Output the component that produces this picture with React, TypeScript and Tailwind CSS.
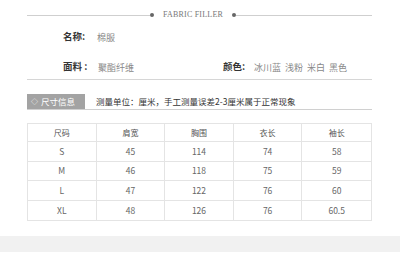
import React from "react";

const cjk = { fontFamily: '"Noto Sans CJK SC", "Noto Sans", sans-serif' };

const rows = [
  ["S", "45", "114", "74", "58"],
  ["M", "46", "118", "75", "59"],
  ["L", "47", "122", "76", "60"],
  ["XL", "48", "126", "76", "60.5"],
];

export default function App() {
  return (
    <div className="w-[400px] h-[270px] bg-white overflow-hidden" style={cjk}>
      <div className="px-[27px] pr-[28px]">
        {/* title */}
        <div className="h-[30px] pt-[9px] flex items-start">
          <div className="h-[12px] w-full flex items-center">
            <div className="flex-1 h-px bg-[#cfcfcf]" />
            <div className="w-[4px] h-[4px] rounded-full bg-[#666]" />
            <div
              className="px-[9px] text-[8px] leading-none text-[#777] tracking-[0.2px]"
              style={{ fontFamily: '"Liberation Serif", serif' }}
            >
              FABRIC FILLER
            </div>
            <div className="w-[4px] h-[4px] rounded-full bg-[#666]" />
            <div className="w-[136px] h-px bg-[#cfcfcf]" />
          </div>
        </div>
        {/* info */}
        <div className="pl-[36px] h-[50px] border-b border-[#d6d6d6] flex flex-col">
          <div className="h-[14px] flex items-center text-[9px] leading-none mt-0">
            <span className="w-[34px] font-bold text-[#333] text-[9.5px]">名称:</span>
            <span className="text-[#888]">棉服</span>
          </div>
          <div className="h-[14px] mt-[16px] flex items-center text-[9px] leading-none">
            <span className="w-[35px] font-bold text-[#333] text-[9.5px]">面料 :</span>
            <span className="w-[125px] text-[#888]">聚酯纤维</span>
            <span className="w-[31px] font-bold text-[#333] text-[9.5px]">颜色:</span>
            <span className="text-[#888] flex gap-[4px]">
              <span>冰川蓝</span>
              <span>浅粉</span>
              <span>米白</span>
              <span>黑色</span>
            </span>
          </div>
        </div>
        {/* section header */}
        <div className="mt-[14px] flex items-stretch h-[16px] border-b border-[#d0d0d0]">
          <div className="w-[58px] bg-[#a3a3a3] text-white text-[8.5px] leading-none flex items-center pl-[4px] gap-[3px]">
            <span className="text-[7px]">◇</span>
            <span>尺寸信息</span>
          </div>
          <div className="pl-[11px] text-[8.5px] leading-none text-[#333] flex items-center">
            测量单位：厘米，手工测量误差2-3厘米属于正常现象
          </div>
        </div>
        {/* table */}
        <div className="mt-[13px] border border-[#e4e4e4]">
          <div className="grid grid-cols-5 h-[18px] border-b border-[#e4e4e4]">
            {["尺码", "肩宽", "胸围", "衣长", "袖长"].map((h, i) => (
              <div
                key={h}
                className={`flex items-center justify-center text-[8px] text-[#555] ${i < 4 ? "border-r border-[#e4e4e4]" : ""}`}
              >
                {h}
              </div>
            ))}
          </div>
          {rows.map((r, ri) => (
            <div
              key={ri}
              className={`grid grid-cols-5 h-[19.5px] ${ri < 3 ? "border-b border-[#e4e4e4]" : ""}`}
            >
              {r.map((c, i) => (
                <div
                  key={i}
                  className={`flex items-center justify-center text-[8.5px] text-[#666] ${i < 4 ? "border-r border-[#e4e4e4]" : ""}`}
                >
                  {c}
                </div>
              ))}
            </div>
          ))}
        </div>
      </div>
      <div className="mt-[15px] h-[16px] bg-[#f1f1f1]" />
    </div>
  );
}
